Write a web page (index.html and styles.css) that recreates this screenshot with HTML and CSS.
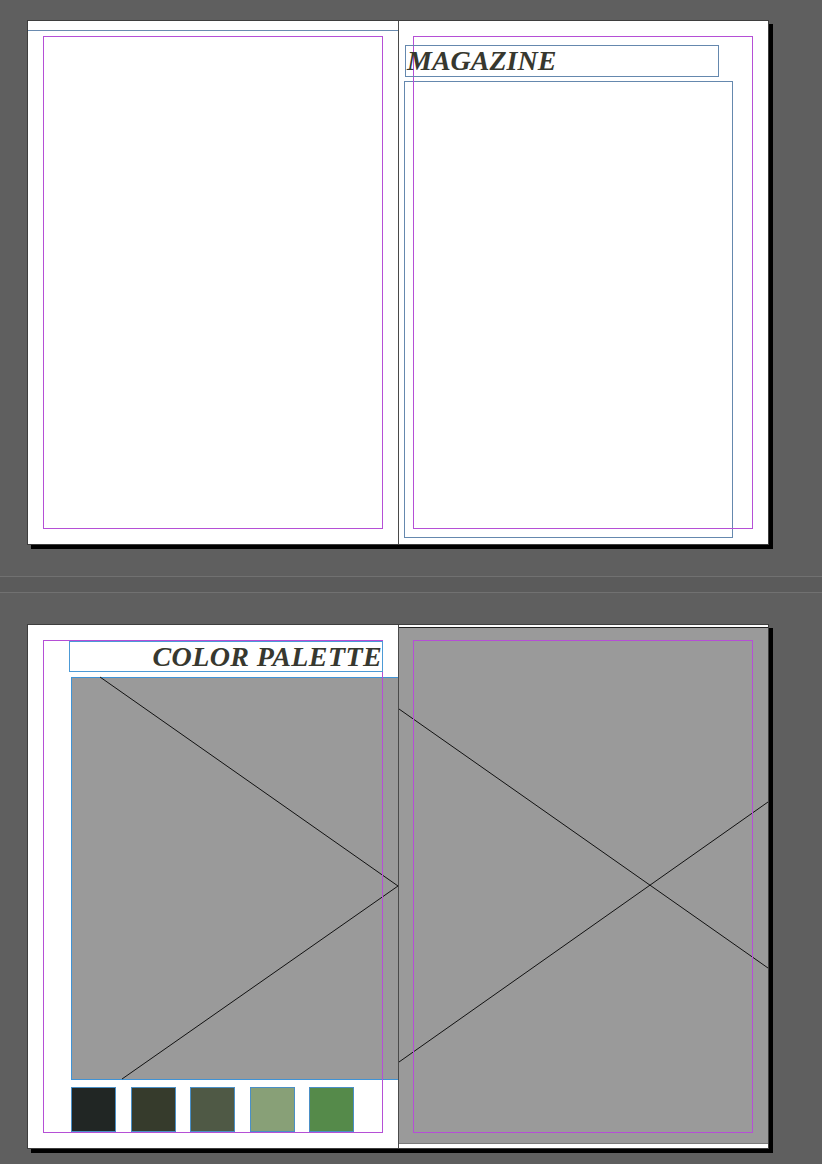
FILE: index.html
```html
<!DOCTYPE html>
<html lang="en">
<head>
  <meta charset="UTF-8" />
  <meta name="viewport" content="width=device-width, initial-scale=1.0"/>
  <title>Magazine layout</title>
  <link rel="stylesheet" href="styles.css">
</head>
<body>
  <main class="pasteboard">

    <section class="spread">
      <div class="page page-left">
        <div class="frame-edge"></div>
        <div class="margins"></div>
      </div>
      <div class="page page-right">
        <div class="text-frame title-frame">
          <h1>MAGAZINE</h1>
        </div>
        <div class="text-frame body-frame"></div>
        <div class="margins"></div>
      </div>
    </section>

    <div class="divider"></div>

    <section class="spread">
      <div class="page page-left">
        <div class="text-frame palette-frame">
          <h2>COLOR PALETTE</h2>
        </div>
        <div class="image-frame hero-frame"></div>
        <div class="swatches">
          <div class="swatch" style="background:#212624"></div>
          <div class="swatch" style="background:#363b2c"></div>
          <div class="swatch" style="background:#4f5945"></div>
          <div class="swatch" style="background:#88a077"></div>
          <div class="swatch" style="background:#558a4a"></div>
        </div>
        <div class="margins"></div>
      </div>
      <div class="page page-right">
        <div class="image-frame bleed-frame"></div>
        <div class="margins"></div>
      </div>

      <!-- empty graphic frame crosses -->
      <svg class="placeholder-x" viewBox="0 0 740 523" xmlns="http://www.w3.org/2000/svg">
        <polyline points="72,52 370,261 94,454" fill="none" stroke="#111" stroke-width="1"/>
        <line x1="371" y1="84" x2="740" y2="343" stroke="#111" stroke-width="1"/>
        <line x1="371" y1="437" x2="740" y2="177" stroke="#111" stroke-width="1"/>
      </svg>
    </section>

  </main>
</body>
</html>
```

FILE: styles.css
```css
body {
  margin: 0;
  padding: 0;
  background-color: #5f5f5f;
  font-family: "Liberation Serif", serif;
}

.pasteboard {
  display: flex;
  flex-direction: column;
  padding-top: 20px;
  min-height: 1144px;
}

.spread {
  position: relative;
  display: flex;
  width: 740px;
  height: 523px;
  margin-left: 27px;
  border: 1px solid #3e3e3e;
  background-color: #fff;
  box-shadow: 4px 4px 0 #000;
}

.page {
  position: relative;
  width: 370px;
  height: 100%;
  box-sizing: border-box;
}

.page-right {
  border-left: 1px solid #4a4a4a;
}

/* margin guides */
.margins {
  position: absolute;
  top: 15px;
  left: 15px;
  right: 15px;
  bottom: 15px;
  border: 1px solid #b54fd6;
  z-index: 3;
}

.page-right .margins {
  left: 14px;
}

.frame-edge {
  position: absolute;
  top: 9px;
  left: 0;
  right: 0;
  height: 1px;
  background-color: #6a8bb0;
}

.text-frame {
  position: absolute;
  box-sizing: border-box;
  border: 1px solid #6588ae;
}

.text-frame h1,
.text-frame h2 {
  margin: 0;
  font-family: "Liberation Serif", serif;
  font-weight: bold;
  font-style: italic;
  font-size: 28px;
  color: #37382f;
  white-space: nowrap;
}

.title-frame {
  top: 24px;
  left: 6px;
  width: 314px;
  height: 32px;
  z-index: 4;
}

.title-frame h1 {
  line-height: 30px;
  padding-left: 1px;
}

.body-frame {
  top: 60px;
  left: 5px;
  width: 329px;
  height: 457px;
}

.palette-frame {
  top: 16px;
  left: 41px;
  width: 314px;
  height: 31px;
  border-color: #4c9ad6;
  z-index: 4;
}

.palette-frame h2 {
  line-height: 29px;
  text-align: right;
  letter-spacing: 0.4px;
}

.image-frame {
  position: absolute;
  box-sizing: border-box;
  background-color: #9a9a9a;
  z-index: 1;
}

.hero-frame {
  top: 52px;
  left: 43px;
  right: 0;
  height: 403px;
  border: 1px solid #3f93d6;
  border-right: none;
}

.bleed-frame {
  top: 2px;
  left: 0;
  right: 0;
  height: 517px;
  border-top: 1px solid #222;
  border-bottom: 1px solid #7a7a7a;
}

.placeholder-x {
  position: absolute;
  top: 0;
  left: 0;
  width: 740px;
  height: 523px;
  z-index: 2;
  pointer-events: none;
}

.swatches {
  position: absolute;
  top: 462px;
  left: 43px;
  display: flex;
  gap: 14.5px;
  z-index: 2;
}

.swatch {
  width: 45px;
  height: 45px;
  box-sizing: border-box;
  border: 1px solid #4a8fc6;
}

.divider {
  height: 15px;
  margin: 31px 0;
  background-color: #5b5b5b;
  border-top: 1px solid #717171;
  border-bottom: 1px solid #717171;
}
```
